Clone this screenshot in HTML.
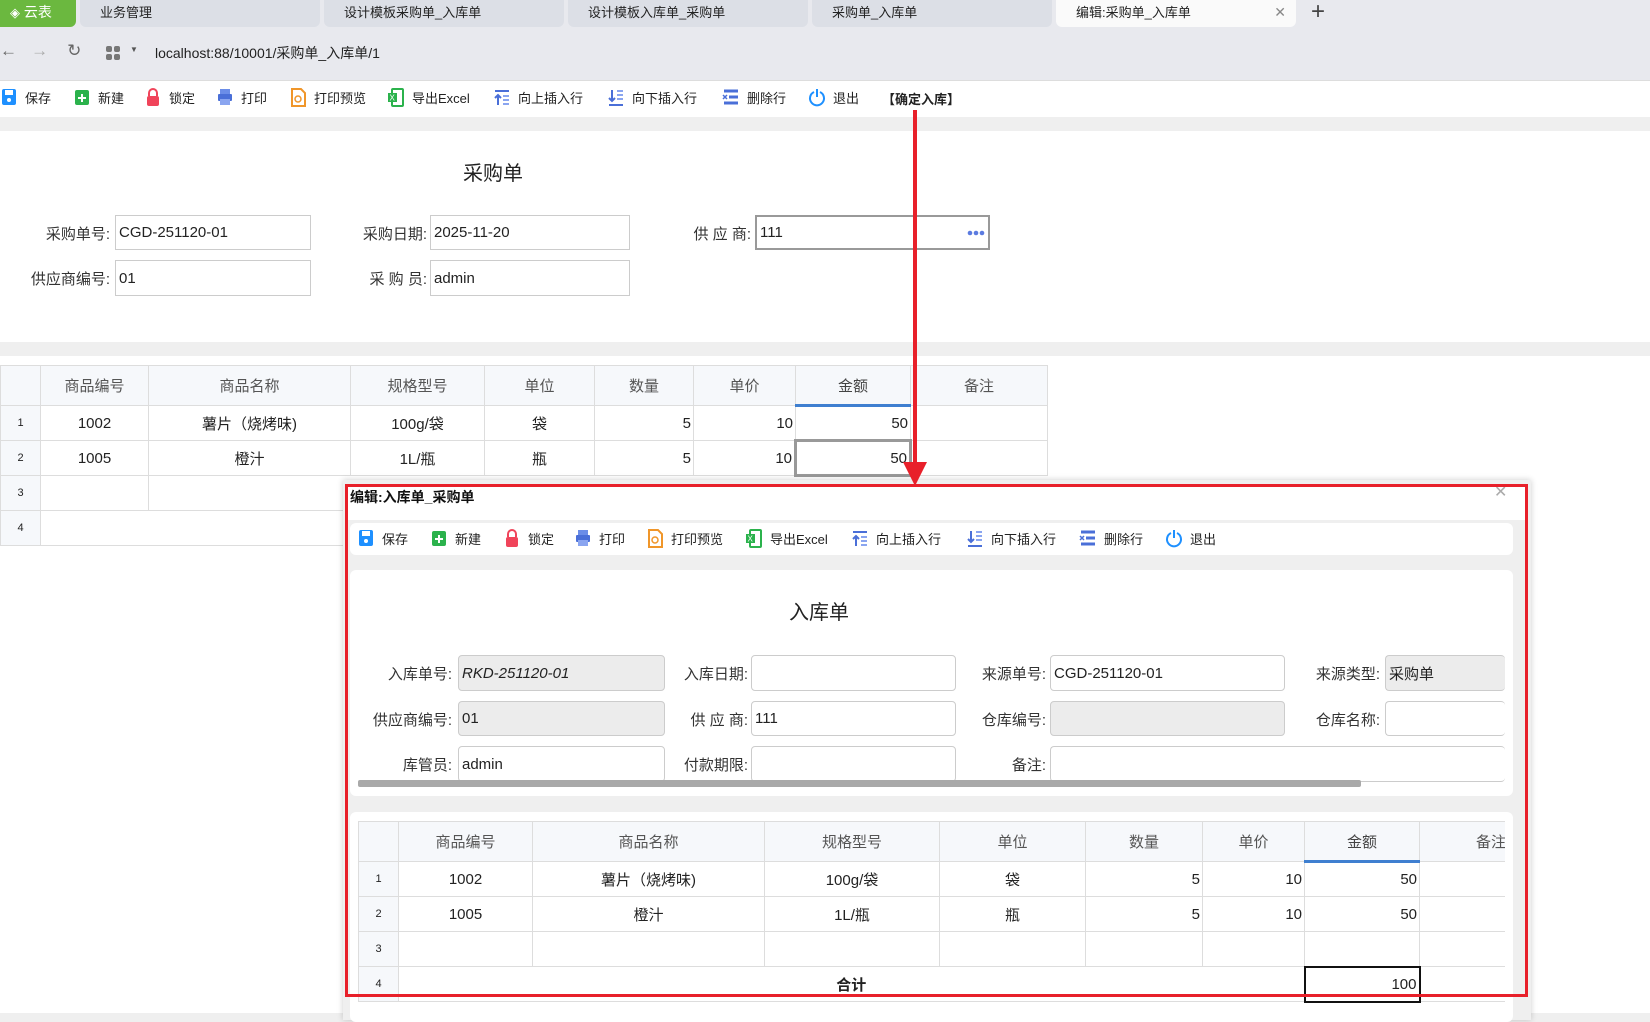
<!DOCTYPE html>
<html><head><meta charset="utf-8">
<style>
*{margin:0;padding:0;box-sizing:border-box}
body{width:1650px;height:1013px;overflow:hidden;position:relative;background:#efefef;font-family:"Liberation Sans","Noto Sans CJK SC",sans-serif;color:#222;font-size:14px}
.a{position:absolute}
.tab{position:absolute;top:0;height:27px;background:#dcdfe6;border-radius:0 0 6px 6px;font-size:13px;line-height:25px;padding-left:20px;color:#222}
.tb{position:absolute;display:flex;align-items:center;font-size:13px;color:#222}
.tb svg{margin-right:7px}
.lbl{position:absolute;text-align:right;font-size:15px;color:#333}
.inp{position:absolute;border:1px solid #ccc;background:#fff;font-size:15px;padding-left:3px;display:flex;align-items:center;color:#222}
.dinp{border-radius:4px}
.gray{background:#ececec}
table{border-collapse:collapse;position:absolute;table-layout:fixed}
td{border:1px solid #ddd;text-align:center;font-size:15px;color:#222;overflow:hidden;white-space:nowrap}
thead td{background:#f6f8fb;color:#555}
td.n{font-size:11px;background:#f6f8fb}
td.r{text-align:right;padding-right:2px}
</style></head><body>
<!-- tab bar -->
<div class="a" style="left:0;top:0;width:1650px;height:80px;background:#e8e9ee"></div>
<div class="a" style="left:0;top:0;width:76px;height:27px;background:#6bb83f;border-radius:0 0 6px 0;color:#fff;font-size:14px;line-height:25px;padding-left:10px"><span style="font-size:13px">◈</span> 云表</div>
<div class="tab" style="left:80px;width:240px">业务管理</div>
<div class="tab" style="left:324px;width:240px">设计模板采购单_入库单</div>
<div class="tab" style="left:568px;width:240px">设计模板入库单_采购单</div>
<div class="tab" style="left:812px;width:240px">采购单_入库单</div>
<div class="tab" style="left:1056px;width:240px;background:#fafafa">编辑:采购单_入库单<span style="position:absolute;right:10px;color:#888;font-size:14px">✕</span></div>
<div class="a" style="left:1311px;top:-2px;font-size:24px;color:#444">+</div>
<!-- address -->
<div class="a" style="left:0;top:41px;font-size:17px;color:#666">←&nbsp;&nbsp;&nbsp;<span style="color:#aaa">→</span>&nbsp;&nbsp;&nbsp;&nbsp;↻</div>
<div class="a" style="left:106px;top:46px;width:14px;height:14px;display:grid;grid-template-columns:6px 6px;gap:2px"><i style="background:#777;border-radius:2px"></i><i style="background:#777;border-radius:2px"></i><i style="background:#777;border-radius:2px"></i><i style="background:#777;border-radius:2px"></i></div>
<div class="a" style="left:130px;top:45px;font-size:8px;color:#555">▼</div>
<div class="a" style="left:155px;top:43px;font-size:14px;color:#222">localhost:88/10001/采购单_入库单/1</div>
<!-- main toolbar -->
<div class="a" style="left:0;top:80px;width:1650px;height:37px;background:#fff;border-top:1px solid #ddd"></div>
<div id="tb1"></div>
<!-- main form panel -->
<div class="a" style="left:0;top:131px;width:1650px;height:211px;background:#fff"></div>
<div class="a" style="left:463px;top:157px;font-size:20px;color:#222">采购单</div>
<div class="lbl" style="left:0;top:223px;width:110px">采购单号:</div>
<div class="inp" style="left:115px;top:215px;width:196px;height:35px">CGD-251120-01</div>
<div class="lbl" style="left:300px;top:223px;width:127px">采购日期:</div>
<div class="inp" style="left:430px;top:215px;width:200px;height:35px">2025-11-20</div>
<div class="lbl" style="left:600px;top:223px;width:151px">供 应 商:</div>
<div class="inp" style="left:755px;top:215px;width:235px;height:35px;border:2px solid #999">111<svg style="position:absolute;right:3px;top:13px" width="18" height="6"><circle cx="3" cy="3" r="2.3" fill="#5b7be0"/><circle cx="9" cy="3" r="2.3" fill="#5b7be0"/><circle cx="15" cy="3" r="2.3" fill="#5b7be0"/></svg></div>
<div class="lbl" style="left:0;top:268px;width:110px">供应商编号:</div>
<div class="inp" style="left:115px;top:260px;width:196px;height:36px">01</div>
<div class="lbl" style="left:300px;top:268px;width:127px">采 购 员:</div>
<div class="inp" style="left:430px;top:260px;width:200px;height:36px">admin</div>
<!-- main table -->
<div class="a" style="left:0;top:356px;width:1650px;height:657px;background:#fff"></div>
<table style="left:0;top:365px;width:1047px">
<colgroup><col style="width:40px"><col style="width:108px"><col style="width:202px"><col style="width:134px"><col style="width:110px"><col style="width:99px"><col style="width:102px"><col style="width:115px"><col style="width:137px"></colgroup>
<thead><tr style="height:40px"><td class="n"></td><td>商品编号</td><td>商品名称</td><td>规格型号</td><td>单位</td><td>数量</td><td>单价</td><td style="border-bottom:3px solid #3f7fd0;color:#444">金额</td><td>备注</td></tr></thead>
<tr style="height:35px"><td class="n">1</td><td>1002</td><td>薯片（烧烤味)</td><td>100g/袋</td><td>袋</td><td class="r">5</td><td class="r">10</td><td class="r">50</td><td></td></tr>
<tr style="height:35px"><td class="n">2</td><td>1005</td><td>橙汁</td><td>1L/瓶</td><td>瓶</td><td class="r">5</td><td class="r">10</td><td class="r" style="border:3px solid #999">50</td><td></td></tr>
<tr style="height:35px"><td class="n">3</td><td></td><td colspan="7" style="border-right:none"></td></tr>
<tr style="height:35px"><td class="n">4</td><td colspan="8" style="border-right:none"></td></tr>
</table>
<!-- dialog -->
<div class="a" style="left:343px;top:480px;width:1188px;height:540px;background:#efefef;box-shadow:0 0 6px rgba(0,0,0,.2)"></div>
<div class="a" style="left:345px;top:484px;width:1183px;height:36px;background:#fff"></div>
<div class="a" style="left:350px;top:487px;font-size:14px;font-weight:bold;color:#111">编辑:入库单_采购单</div>
<div class="a" style="left:1494px;top:482px;font-size:16px;color:#aaa">✕</div>
<div class="a" style="left:350px;top:523px;width:1163px;height:32px;background:#fff;border-radius:6px"></div>
<div id="tb2"></div>
<div class="a" style="left:350px;top:570px;width:1163px;height:226px;background:#fff;border-radius:6px;overflow:hidden">
</div>
<div class="a" style="left:789px;top:596px;font-size:20px;color:#222">入库单</div>
<div class="lbl" style="left:350px;top:663px;width:102px">入库单号:</div>
<div class="inp dinp gray" style="left:458px;top:655px;width:207px;height:36px;font-style:italic">RKD-251120-01</div>
<div class="lbl" style="left:660px;top:663px;width:88px">入库日期:</div>
<div class="inp dinp" style="left:751px;top:655px;width:205px;height:36px"></div>
<div class="lbl" style="left:950px;top:663px;width:96px">来源单号:</div>
<div class="inp dinp" style="left:1050px;top:655px;width:235px;height:36px">CGD-251120-01</div>
<div class="lbl" style="left:1280px;top:663px;width:100px">来源类型:</div>
<div class="inp dinp gray" style="left:1385px;top:655px;width:120px;height:36px;border-right:none">采购单</div>
<div class="lbl" style="left:350px;top:709px;width:102px">供应商编号:</div>
<div class="inp dinp gray" style="left:458px;top:701px;width:207px;height:35px">01</div>
<div class="lbl" style="left:660px;top:709px;width:88px">供 应 商:</div>
<div class="inp dinp" style="left:751px;top:701px;width:205px;height:35px">111</div>
<div class="lbl" style="left:950px;top:709px;width:96px">仓库编号:</div>
<div class="inp dinp gray" style="left:1050px;top:701px;width:235px;height:35px"></div>
<div class="lbl" style="left:1280px;top:709px;width:100px">仓库名称:</div>
<div class="inp dinp" style="left:1385px;top:701px;width:120px;height:35px;border-right:none"></div>
<div class="lbl" style="left:350px;top:754px;width:102px">库管员:</div>
<div class="inp dinp" style="left:458px;top:746px;width:207px;height:36px">admin</div>
<div class="lbl" style="left:660px;top:754px;width:88px">付款期限:</div>
<div class="inp dinp" style="left:751px;top:746px;width:205px;height:36px"></div>
<div class="lbl" style="left:950px;top:754px;width:96px">备注:</div>
<div class="inp dinp" style="left:1050px;top:746px;width:455px;height:36px;border-right:none"></div>
<div class="a" style="left:358px;top:780px;width:1003px;height:7px;background:#a9a9a9;border-radius:2px"></div>
<div class="a" style="left:350px;top:812px;width:1163px;height:210px;background:#fff;border-radius:6px"></div>
<div class="a" style="left:358px;top:821px;width:1147px;height:190px;overflow:hidden">
<table style="left:0;top:0;width:1165px">
<colgroup><col style="width:40px"><col style="width:134px"><col style="width:232px"><col style="width:175px"><col style="width:146px"><col style="width:117px"><col style="width:102px"><col style="width:115px"><col style="width:104px"></colgroup>
<thead><tr style="height:40px"><td class="n"></td><td>商品编号</td><td>商品名称</td><td>规格型号</td><td>单位</td><td>数量</td><td>单价</td><td style="border-bottom:3px solid #3f7fd0;color:#444">金额</td><td style="text-align:left;padding-left:56px">备注</td></tr></thead>
<tr style="height:35px"><td class="n">1</td><td>1002</td><td>薯片（烧烤味)</td><td>100g/袋</td><td>袋</td><td class="r">5</td><td class="r">10</td><td class="r">50</td><td></td></tr>
<tr style="height:35px"><td class="n">2</td><td>1005</td><td>橙汁</td><td>1L/瓶</td><td>瓶</td><td class="r">5</td><td class="r">10</td><td class="r">50</td><td></td></tr>
<tr style="height:35px"><td class="n">3</td><td></td><td></td><td></td><td></td><td></td><td></td><td></td><td></td></tr>
<tr style="height:35px"><td class="n">4</td><td colspan="6" style="font-weight:bold;border-left:1px solid #ddd">合计</td><td class="r" style="border:2px solid #111">100</td><td></td></tr>
</table></div>
<!-- red annotations -->
<div class="a" style="left:345px;top:484px;width:1183px;height:513px;border:3px solid #e8202a"></div>
<div class="a" style="left:913px;top:110px;width:4px;height:358px;background:#e8202a"></div>
<svg class="a" style="left:903px;top:462px" width="24" height="26"><polygon points="0,0 24,0 12,24" fill="#e8202a"/></svg>
<script>
function ic(c,t){
 var s={save:'<rect x="2" y="1" width="14" height="16" rx="2" fill="#1e90ff"/><rect x="5" y="2" width="8" height="5" fill="#fff"/><circle cx="9" cy="12" r="2" fill="#fff"/>',
 add:'<rect x="2" y="2" width="14" height="15" rx="2" fill="#2bb24c"/><path d="M9 6v8M5 10h8" stroke="#fff" stroke-width="2"/>',
 lock:'<path d="M5 8V5a4 4 0 0 1 8 0v3" stroke="#f0445a" stroke-width="2" fill="none"/><rect x="3" y="8" width="12" height="10" rx="2" fill="#f0445a"/>',
 print:'<rect x="4" y="1" width="10" height="5" fill="#6b8de8"/><rect x="2" y="6" width="14" height="7" rx="1" fill="#4a6fd8"/><rect x="4" y="11" width="10" height="6" fill="#8aa5f0"/>',
 prev:'<path d="M3 1h9l4 4v13H3z" fill="none" stroke="#f0962a" stroke-width="2"/><circle cx="9" cy="11" r="3" stroke="#f0962a" stroke-width="1.5" fill="none"/>',
 xls:'<rect x="5" y="1" width="11" height="17" rx="1" fill="none" stroke="#2bb24c" stroke-width="2"/><rect x="1" y="5" width="9" height="9" fill="#2bb24c"/><text x="2.5" y="12.5" font-size="8" fill="#fff" font-family="Liberation Sans">X</text>',
 up:'<rect x="2" y="2" width="14" height="2" fill="#4a6fd8"/><path d="M5 17V7M2 10l3-3 3 3" stroke="#4a6fd8" stroke-width="2" fill="none"/><path d="M10 8h6M10 12h6M10 16h6" stroke="#8aa5f0" stroke-width="2"/>',
 down:'<rect x="2" y="16" width="14" height="2" fill="#4a6fd8"/><path d="M5 2v11M2 10l3 3 3-3" stroke="#4a6fd8" stroke-width="2" fill="none"/><path d="M10 3h6M10 7h6M10 11h6" stroke="#8aa5f0" stroke-width="2"/>',
 del:'<path d="M2 3h14M7 9h9M2 15h14" stroke="#4a6fd8" stroke-width="3"/><path d="M1 7l4 4M5 7l-4 4" stroke="#4a6fd8" stroke-width="1.5"/>',
 exit:'<path d="M6 4a7 7 0 1 0 6 0" stroke="#1e90ff" stroke-width="2" fill="none"/><path d="M9 1v8" stroke="#1e90ff" stroke-width="2"/>'};
 return '<svg width="18" height="19" viewBox="0 0 18 19">'+s[c]+'</svg>'+t;}
function bar(id,top,xs,ex){var L=[['save','保存'],['add','新建'],['lock','锁定'],['print','打印'],['prev','打印预览'],['xls','导出Excel'],['up','向上插入行'],['down','向下插入行'],['del','删除行'],['exit','退出']];var h='';
L.forEach(function(l,i){h+='<div class="tb" style="left:'+xs[i]+'px;top:'+top+'px">'+ic(l[0],l[1])+'</div>';});
if(ex)h+='<div class="tb" style="left:882px;top:'+(top+1)+'px;font-weight:bold">【确定入库】</div>';document.getElementById(id).innerHTML=h;}
bar('tb1',88,[0,73,144,216,289,387,493,607,722,808],1);
bar('tb2',529,[357,430,503,574,646,745,851,966,1079,1165],0);
</script>
</body></html>
